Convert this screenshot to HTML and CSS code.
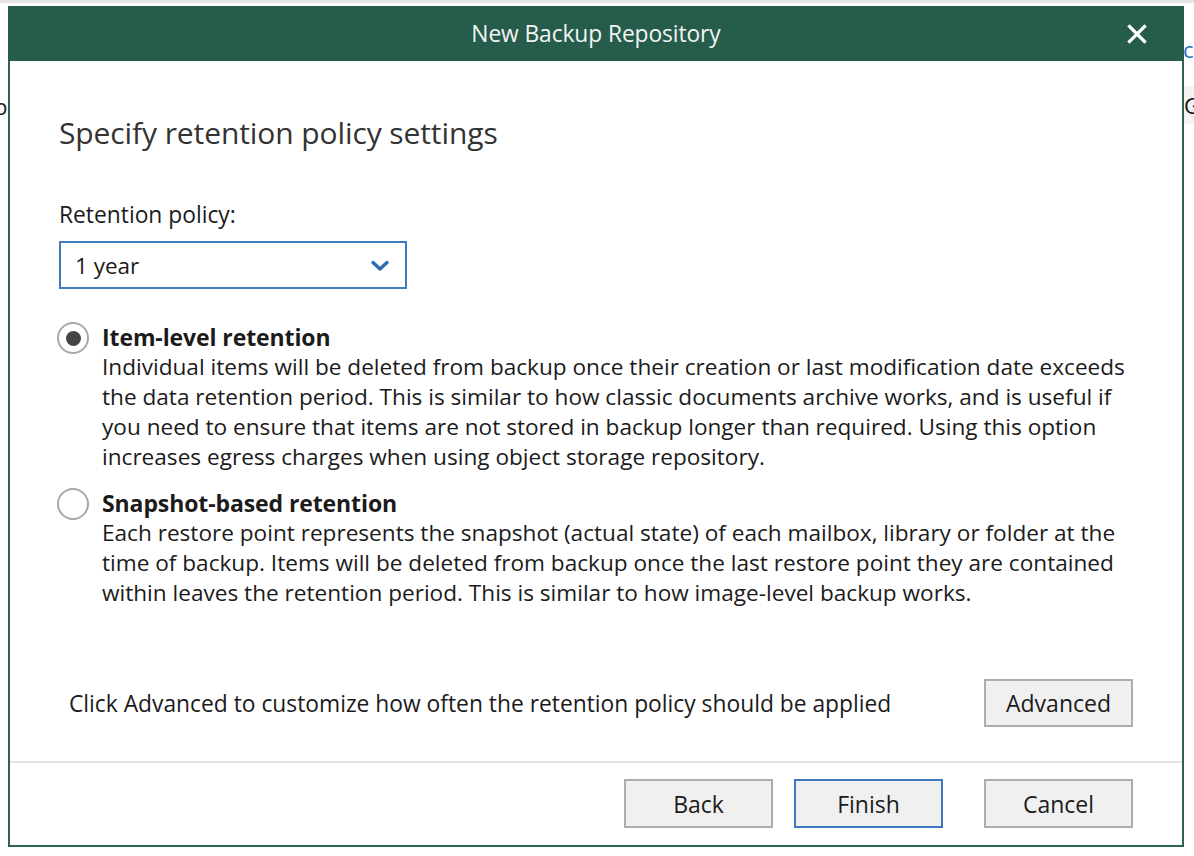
FILE: index.html
```html
<!DOCTYPE html>
<html lang="en">
<head>
<meta charset="utf-8">
<title>New Backup Repository</title>
<link rel="stylesheet" href="styles.css">
</head>
<body>
<div class="backdrop">
  <div class="strip"></div>
  <div class="bg-row">
    <div class="bg-left"><span class="bg-glyph-p">p</span></div>
    <div class="bg-right">
      <div class="bg-link">co</div>
      <div class="bg-cell">Ge</div>
    </div>
  </div>
</div>

<div class="dialog">
  <div class="titlebar">
    <span class="title">New Backup Repository</span>
    <button class="close" aria-label="Close">
      <svg width="20" height="20" viewBox="0 0 20 20"><path d="M2.5 2.5 L17.5 17.5 M17.5 2.5 L2.5 17.5" stroke="#fff" stroke-width="3.2" stroke-linecap="square" fill="none"/></svg>
    </button>
  </div>

  <div class="content">
    <h1 class="heading">Specify retention policy settings</h1>

    <div class="label">Retention policy:</div>
    <div class="select">
      <span class="select-value">1 year</span>
      <svg class="chevron" width="20" height="12" viewBox="0 0 20 12"><path d="M3 2.5 L10 9 L17 2.5" stroke="#2f6db3" stroke-width="3.4" fill="none" stroke-linecap="round" stroke-linejoin="round"/></svg>
    </div>

    <div class="option option-first">
      <span class="radio checked"><span class="dot"></span></span>
      <div class="option-text">
        <div class="option-title">Item-level retention</div>
        <div class="option-desc">
          <div class="line">Individual items will be deleted from backup once their creation or last modification date exceeds</div>
          <div class="line">the data retention period. This is similar to how classic documents archive works, and is useful if</div>
          <div class="line">you need to ensure that items are not stored in backup longer than required. Using this option</div>
          <div class="line">increases egress charges when using object storage repository.</div>
        </div>
      </div>
    </div>

    <div class="option option-second">
      <span class="radio"></span>
      <div class="option-text">
        <div class="option-title">Snapshot-based retention</div>
        <div class="option-desc">
          <div class="line">Each restore point represents the snapshot (actual state) of each mailbox, library or folder at the</div>
          <div class="line">time of backup. Items will be deleted from backup once the last restore point they are contained</div>
          <div class="line">within leaves the retention period. This is similar to how image-level backup works.</div>
        </div>
      </div>
    </div>

    <div class="advanced-row">
      <span class="advanced-text">Click Advanced to customize how often the retention policy should be applied</span>
      <button class="btn">Advanced</button>
    </div>
  </div>

  <div class="footer">
    <button class="btn">Back</button>
    <button class="btn btn-default">Finish</button>
    <button class="btn btn-cancel">Cancel</button>
  </div>
</div>
</body>
</html>
```

FILE: styles.css
```css
* { box-sizing: border-box; }

html, body {
  margin: 0;
  padding: 0;
  background: #ffffff;
  width: 1194px;
  height: 856px;
  overflow: hidden;
  font-family: "Open Sans", "Noto Sans", "Liberation Sans", sans-serif;
  color: #1b1b1b;
}

/* background page behind the window */
.backdrop {
  width: 1194px;
  height: 856px;
}
.strip {
  height: 3px;
  background: #e4e4e4;
}
.bg-row {
  display: flex;
  justify-content: space-between;
}
.bg-left {
  padding-top: 88px;
  margin-left: -6px;
  font-size: 22px;
  line-height: 30px;
  color: #222;
}
.bg-right {
  width: 10px;
  overflow: hidden;
  padding-top: 31px;
  font-size: 22px;
  line-height: 30px;
}
.bg-link {
  color: #1f6fc4;
  margin-left: -1px;
}
.bg-cell {
  margin-top: 22px;
  background: #f3f3f3;
  color: #111;
  padding: 4px 0;
}

/* dialog window */
.dialog {
  position: absolute;
  left: 8px;
  top: 6px;
  width: 1176px;
  height: 841px;
  border: 2px solid #2d6353;
  border-top: none;
  background: #ffffff;
  display: flex;
  flex-direction: column;
}

.titlebar {
  height: 55px;
  margin: 0 -2px;
  background: #265c4b;
  display: flex;
  align-items: center;
  justify-content: center;
  position: relative;
}
.title {
  color: #f2f5f4;
  font-size: 22.8px;
  letter-spacing: -0.1px;
  margin-top: -1px;
}
.close {
  position: absolute;
  right: 37px;
  top: 18px;
  width: 20px;
  height: 20px;
  padding: 0;
  border: none;
  background: transparent;
  display: flex;
}

.content {
  flex: 1;
  padding: 52px 49px 0 49px;
  display: flex;
  flex-direction: column;
}

.heading {
  margin: 0;
  font-weight: normal;
  font-size: 30px;
  line-height: 40px;
  color: #333333;
  letter-spacing: -0.1px;
}

.label {
  margin-top: 47px;
  font-size: 22.8px;
  line-height: 30px;
}

.select {
  margin-top: 11px;
  width: 348px;
  height: 48px;
  border: 2px solid #3f7bc2;
  display: flex;
  align-items: center;
  justify-content: space-between;
  padding: 0 15px 0 14px;
}
.select-value {
  font-size: 22.5px;
}
.chevron { display: block; margin-top: 2px; }

.option {
  display: flex;
  gap: 13px;
}
.option-first { margin-top: 33px; }
.option-second { margin-top: 16px; }

.radio {
  flex: none;
  width: 32px;
  height: 32px;
  margin-left: -2px;
  margin-top: 0px;
  border: 2px solid #a8a8a8;
  border-radius: 50%;
  display: flex;
  align-items: center;
  justify-content: center;
  background: #fff;
}
.dot {
  width: 15px;
  height: 15px;
  border-radius: 50%;
  background: #444444;
}

.option-title {
  font-weight: bold;
  font-size: 23px;
  line-height: 30px;
  letter-spacing: -0.1px;
}
.option-desc {
  font-size: 22.6px;
  line-height: 30px;
}
.line { white-space: nowrap; }

.advanced-row {
  margin-top: 71px;
  display: flex;
  align-items: center;
  justify-content: space-between;
}
.advanced-text {
  font-size: 22.8px;
  padding-left: 10px;
}

.btn {
  width: 149px;
  height: 48px;
  background: #f0f0f0;
  border: 2px solid #adadad;
  font-family: inherit;
  font-size: 23px;
  color: #1b1b1b;
  padding: 0;
}
.btn-default {
  border-color: #3d79c0;
}

.footer {
  height: 84px;
  border-top: 2px solid #e2e2e2;
  display: flex;
  justify-content: flex-end;
  align-items: flex-start;
  padding: 16px 49px 0 0;
  gap: 21px;
}
.footer .btn { height: 49px; }
.btn-cancel { margin-left: 20px; }
```
